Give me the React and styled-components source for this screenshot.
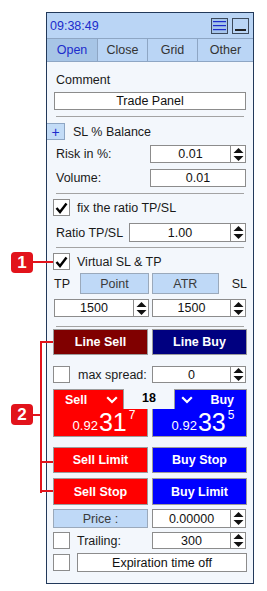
import React from 'react';
import styled, { createGlobalStyle } from 'styled-components';

const Global = createGlobalStyle`
  html, body { margin: 0; padding: 0; background: #ffffff; }
  body { font-family: "Liberation Sans", Arial, sans-serif; }
  * { box-sizing: border-box; }
`;

const Page = styled.div`
  position: relative;
  width: 267px;
  height: 591px;
  padding: 12px 0 0 46px;
`;

const Panel = styled.div`
  width: 208px;
  height: 572px;
  border: 1px solid #22395a;
  background: #f3f7fc;
  display: flex;
  flex-direction: column;
`;

const TitleBar = styled.div`
  height: 25px;
  background: #bad5f5;
  display: flex;
  align-items: center;
  padding: 0 4px 0 3px;
  gap: 4px;
`;

const Time = styled.div`
  flex: 1;
  color: #1c2ccc;
  font-size: 12.5px;
`;

const IconBtn = styled.div`
  width: 17px;
  height: 16px;
  border: 1px solid #3d4a5c;
  background: ${p => (p.$active ? '#a6c5ea' : '#bad5f5')};
  display: flex;
  align-items: center;
  justify-content: center;
`;

const Tabs = styled.div`
  display: flex;
  height: 24px;
  border-top: 1px solid #8ea6c4;
  border-bottom: 1px solid #8ea6c4;
  background: #bad5f5;
`;

const Tab = styled.div`
  width: ${p => p.$w}px;
  display: flex;
  align-items: center;
  justify-content: center;
  font-size: 12.5px;
  color: ${p => (p.$active ? '#1c2ccc' : '#333333')};
  background: ${p => (p.$active ? '#a7c5e6' : 'transparent')};
  border-right: ${p => (p.$last ? 'none' : '1px solid #8ea6c4')};
`;

const Body = styled.div`
  flex: 1;
  padding: 0 6px;
  display: flex;
  flex-direction: column;
`;

const Row = styled.div`
  display: flex;
  align-items: center;
  height: ${p => p.$h}px;
  margin-top: ${p => p.$mt}px;
  gap: ${p => p.$gap || 0}px;
  justify-content: ${p => p.$between ? 'space-between' : 'flex-start'};
`;

const Label = styled.span`
  font-size: 12.5px;
  color: #1a1a1a;
  padding-left: ${p => p.$pl || 0}px;
  white-space: nowrap;
`;

const TextBox = styled.div`
  height: 100%;
  width: ${p => (p.$w ? `${p.$w}px` : 'auto')};
  flex: ${p => (p.$w ? 'none' : '1')};
  margin-left: ${p => p.$ml || 0}px;
  margin-right: ${p => p.$mr || 0}px;
  background: #ffffff;
  border: 1px solid #8c8c8c;
  display: flex;
  align-items: center;
  justify-content: center;
  font-size: 12.5px;
  color: #111111;
`;

const Sep = styled.div`
  height: 1px;
  margin: ${p => p.$mt}px 3px 0 3px;
  background: #a3a3a3;
`;

const PlusBtn = styled.div`
  width: 18px;
  height: 100%;
  margin-left: -6px;
  background: #c3dcf7;
  border: 1px solid #8ea6c4;
  border-left: none;
  color: #1c2ccc;
  font-size: 14px;
  display: flex;
  align-items: center;
  justify-content: center;
`;

const SpinBox = styled.div`
  display: flex;
  height: 100%;
  width: ${p => p.$w}px;
  margin-right: ${p => p.$mr || 0}px;
  margin-left: ${p => p.$ml || 0}px;
`;

const SpinValue = styled.div`
  flex: 1;
  background: #ffffff;
  border: 1px solid #8c8c8c;
  display: flex;
  align-items: center;
  justify-content: center;
  font-size: 12.5px;
  color: #111111;
`;

const SpinArrows = styled.div`
  width: 15px;
  background: #ffffff;
  border: 1px solid #8c8c8c;
  border-left: none;
  display: flex;
  align-items: center;
  justify-content: center;
`;

const Check = styled.div`
  width: 17px;
  height: 17px;
  background: #ffffff;
  border: 1px solid #8c8c8c;
  display: flex;
  align-items: center;
  justify-content: center;
  flex: none;
`;

const LightBtn = styled.div`
  width: ${p => p.$w}px;
  height: 100%;
  background: #bfd9f7;
  border: 1px solid #9aa9bb;
  color: #3a3a3a;
  font-size: 12.5px;
  display: flex;
  align-items: center;
  justify-content: center;
  margin-left: ${p => p.$ml || 0}px;
`;

const Pair = styled.div`
  display: grid;
  grid-template-columns: 95px 95px;
  column-gap: 4px;
  height: ${p => p.$h}px;
  margin-top: ${p => p.$mt}px;
`;

const ActionBtn = styled.div`
  background: ${p => p.$bg};
  border: 1px solid #9c9c9c;
  color: #ffffff;
  font-weight: bold;
  font-size: 12.5px;
  display: flex;
  align-items: center;
  justify-content: center;
`;

const Block = styled.div`
  margin-top: 6px;
  height: 48px;
  display: flex;
  flex-direction: column;
`;

const BlockTop = styled.div`
  display: flex;
  height: 20px;
`;

const Head = styled.div`
  width: ${p => p.$w}px;
  background: ${p => p.$bg};
  border: 1px solid #9c9c9c;
  border-bottom: none;
  color: #ffffff;
  font-weight: bold;
  font-size: 12.5px;
  display: flex;
  align-items: center;
  justify-content: space-between;
  padding: ${p => p.$pad};
`;

const Spread = styled.div`
  flex: 1;
  display: flex;
  align-items: center;
  justify-content: center;
  font-weight: bold;
  font-size: 12.5px;
  color: #000000;
  padding-bottom: 3px;
`;

const BlockBottom = styled.div`
  display: grid;
  grid-template-columns: 95px 95px;
  column-gap: 4px;
  height: 28px;
`;

const PriceCell = styled.div`
  background: ${p => p.$bg};
  border: 1px solid #9c9c9c;
  border-top: none;
  color: #ffffff;
  display: flex;
  align-items: flex-end;
  justify-content: center;
  padding: 0 0 4px 7px;
`;

const Small = styled.span`
  font-size: 13px;
  line-height: 13px;
  margin-right: 1px;
`;

const Big = styled.span`
  font-size: 25px;
  line-height: 20px;
`;

const Sup = styled.span`
  font-size: 12px;
  align-self: flex-start;
  margin-top: -1px;
  margin-left: 2px;
`;

const Badge = styled.div`
  position: absolute;
  left: 11px;
  top: ${p => p.$top}px;
  width: 22px;
  height: 21px;
  border-radius: 4px;
  background: #e2131b;
  color: #ffffff;
  font-weight: bold;
  font-size: 17px;
  display: flex;
  align-items: center;
  justify-content: center;
`;

const Line = styled.div`
  position: absolute;
  background: #e2131b;
  left: ${p => p.$x}px;
  top: ${p => p.$y}px;
  width: ${p => p.$w}px;
  height: ${p => p.$h}px;
`;

const Arrows = () => (
  <svg width="11" height="15" viewBox="0 0 11 15">
    <polygon points="5.5,1 10.5,6 0.5,6" fill="#111" />
    <polygon points="0.5,9 10.5,9 5.5,14" fill="#111" />
  </svg>
);

const Spin = ({ value, w, mr, ml }) => (
  <SpinBox $w={w} $mr={mr} $ml={ml}>
    <SpinValue>{value}</SpinValue>
    <SpinArrows>
      <Arrows />
    </SpinArrows>
  </SpinBox>
);

const Tick = () => (
  <svg width="13" height="12" viewBox="0 0 13 12">
    <polyline points="1.5,6 5,10 11.5,1.5" fill="none" stroke="#000" strokeWidth="2.4" />
  </svg>
);

const Chevron = () => (
  <svg width="12" height="8" viewBox="0 0 12 8">
    <polyline points="1.2,1.2 6,6 10.8,1.2" fill="none" stroke="#fff" strokeWidth="2.2" />
  </svg>
);

export default function App() {
  return (
    <>
      <Global />
      <Page>
        <Panel>
          <TitleBar>
            <Time>09:38:49</Time>
            <IconBtn $active>
              <svg width="13" height="11" viewBox="0 0 13 11">
                <rect x="0" y="1" width="13" height="1.2" fill="#1c2ccc" />
                <rect x="0" y="5" width="13" height="1.2" fill="#1c2ccc" />
                <rect x="0" y="9" width="13" height="1.2" fill="#1c2ccc" />
              </svg>
            </IconBtn>
            <IconBtn>
              <svg width="13" height="12" viewBox="0 0 13 12">
                <rect x="1" y="9" width="11" height="2" fill="#222" />
              </svg>
            </IconBtn>
          </TitleBar>
          <Tabs>
            <Tab $w={51} $active>Open</Tab>
            <Tab $w={50}>Close</Tab>
            <Tab $w={50}>Grid</Tab>
            <Tab $w={55} $last>Other</Tab>
          </Tabs>
          <Body>
            <Row $h={18} $mt={9}>
              <Label $pl={3}>Comment</Label>
            </Row>
            <Row $h={18} $mt={3}>
              <TextBox $ml={1} $mr={1}>Trade Panel</TextBox>
            </Row>
            <Sep $mt={6} />
            <Row $h={17} $mt={6} $gap={8}>
              <PlusBtn>+</PlusBtn>
              <Label>SL % Balance</Label>
            </Row>
            <Row $h={18} $mt={5} $between>
              <Label $pl={3}>Risk in %:</Label>
              <Spin value="0.01" w={96} mr={1} />
            </Row>
            <Row $h={18} $mt={6} $between>
              <Label $pl={3}>Volume:</Label>
              <TextBox $w={96} $mr={1}>0.01</TextBox>
            </Row>
            <Sep $mt={6} />
            <Row $h={17} $mt={5} $gap={7}>
              <Check $ml={1}><Tick /></Check>
              <Label>fix the ratio TP/SL</Label>
            </Row>
            <Row $h={19} $mt={7} $between>
              <Label $pl={3}>Ratio TP/SL</Label>
              <Spin value="1.00" w={117} mr={1} />
            </Row>
            <Sep $mt={5} />
            <Row $h={17} $mt={5} $gap={7}>
              <Check><Tick /></Check>
              <Label>Virtual SL &amp; TP</Label>
            </Row>
            <Row $h={21} $mt={3}>
              <Label $pl={1}>TP</Label>
              <LightBtn $w={69} $ml={10}>Point</LightBtn>
              <LightBtn $w={67} $ml={3}>ATR</LightBtn>
              <Label $pl={13}>SL</Label>
            </Row>
            <Row $h={18} $mt={5}>
              <Spin value="1500" w={95} ml={1} />
              <Spin value="1500" w={94} ml={3} />
            </Row>
            <Sep $mt={9} />
            <Pair $h={26} $mt={2}>
              <ActionBtn $bg="#800000">Line Sell</ActionBtn>
              <ActionBtn $bg="#000080">Line Buy</ActionBtn>
            </Pair>
            <Row $h={17} $mt={11} $between>
              <Row $h={17} $mt={0} $gap={8}>
                <Check />
                <Label>max spread:</Label>
              </Row>
              <Spin value="0" w={94} mr={1} />
            </Row>
            <Block>
              <BlockTop>
                <Head $w={71} $bg="#ff0000" $pad="0 5px 0 11px">
                  <span>Sell</span>
                  <Chevron />
                </Head>
                <Spread>18</Spread>
                <Head $w={73} $bg="#0000ff" $pad="0 12px 0 6px">
                  <Chevron />
                  <span>Buy</span>
                </Head>
              </BlockTop>
              <BlockBottom>
                <PriceCell $bg="#ff0000">
                  <Small>0.92</Small>
                  <Big>31</Big>
                  <Sup>7</Sup>
                </PriceCell>
                <PriceCell $bg="#0000ff">
                  <Small>0.92</Small>
                  <Big>33</Big>
                  <Sup>5</Sup>
                </PriceCell>
              </BlockBottom>
            </Block>
            <Pair $h={26} $mt={10}>
              <ActionBtn $bg="#ff0000">Sell Limit</ActionBtn>
              <ActionBtn $bg="#0000ff">Buy Stop</ActionBtn>
            </Pair>
            <Pair $h={27} $mt={5}>
              <ActionBtn $bg="#ff0000">Sell Stop</ActionBtn>
              <ActionBtn $bg="#0000ff">Buy Limit</ActionBtn>
            </Pair>
            <Row $h={19} $mt={4} $between>
              <LightBtn $w={95}>Price :</LightBtn>
              <Spin value="0.00000" w={94} mr={1} />
            </Row>
            <Row $h={17} $mt={4} $between>
              <Row $h={17} $mt={0} $gap={7}>
                <Check />
                <Label>Trailing:</Label>
              </Row>
              <Spin value="300" w={94} mr={1} />
            </Row>
            <Row $h={19} $mt={4} $gap={7}>
              <Check />
              <TextBox>Expiration time off</TextBox>
            </Row>
          </Body>
        </Panel>
        <Badge $top={252}>1</Badge>
        <Line $x={33} $y={261} $w={20} $h={2} />
        <Badge $top={404}>2</Badge>
        <Line $x={40} $y={341} $w={2} $h={152} />
        <Line $x={40} $y={341} $w={13} $h={2} />
        <Line $x={40} $y={461} $w={13} $h={2} />
        <Line $x={40} $y={490} $w={13} $h={2} />
        <Line $x={33} $y={414} $w={8} $h={2} />
      </Page>
    </>
  );
}
